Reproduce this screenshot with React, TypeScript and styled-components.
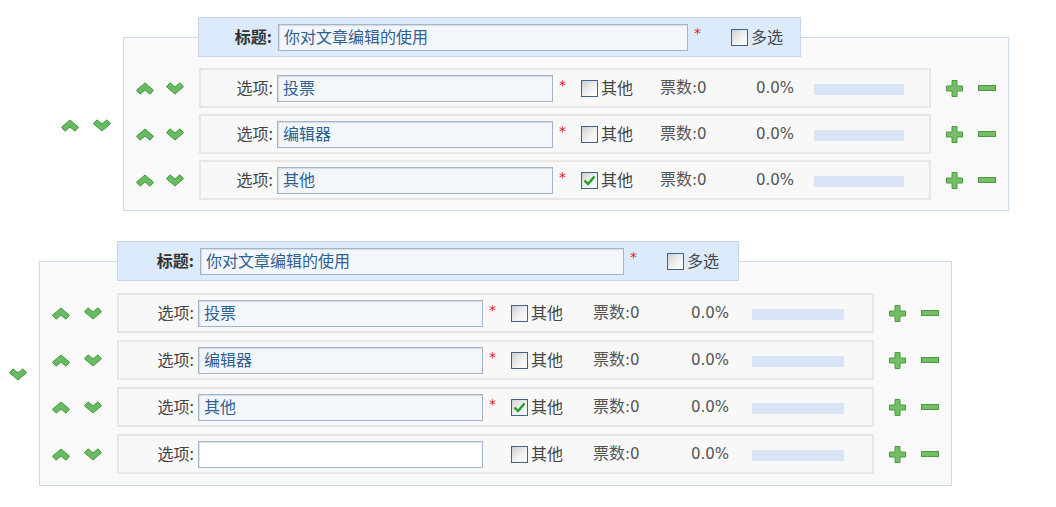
import React from "react";
import styled, { createGlobalStyle } from "styled-components";

const GlobalStyle = createGlobalStyle`
  html, body {
    margin: 0;
    padding: 0;
    background: #ffffff;
  }
  body {
    font-family: "DejaVu Sans", "Noto Sans CJK SC", sans-serif;
    font-size: 15px;
    color: #444;
  }
`;

interface Cols {
  label: number;
  input: number;
  star: number;
  check: number;
  votes: number;
  pct: number;
  bar: number;
}

interface Layout {
  left: number;
  top: number;
  showUp: boolean;
  titleShift: number;
  titleLabel: number;
  titleInput: number;
  titleStar: number;
  titleCheck: number;
  padTop: number;
  padBottom: number;
  gap: number;
  armWidth: number;
  armGap: number;
  rowWidth: number;
  cols: Cols;
}

interface Option {
  text: string;
  required: boolean;
  other: boolean;
}

const cjk = `"Noto Sans CJK SC", sans-serif`;

const Page = styled.div`
  display: flex;
  flex-direction: column;
`;

const Block = styled.section<{ $left: number; $top: number }>`
  display: flex;
  flex-direction: column;
  margin-left: ${(p) => p.$left}px;
  margin-top: ${(p) => p.$top}px;
`;

const TitleBar = styled.div<{ $shift: number }>`
  position: relative;
  z-index: 1;
  display: flex;
  align-items: center;
  height: 40px;
  box-sizing: border-box;
  margin-left: ${(p) => p.$shift}px;
  margin-bottom: -20px;
  background: #dcebfb;
  border: 1px solid #c3d6ec;
  align-self: flex-start;
`;

const TitleLabel = styled.label<{ $w: number }>`
  width: ${(p) => p.$w}px;
  box-sizing: border-box;
  padding-right: 6px;
  text-align: right;
  font-weight: bold;
  color: #333;
  font-family: ${cjk};
  font-size: 16px;
  line-height: 20px;
  margin-top: -2px;
`;

const TextInput = styled.input<{ $w: number; $blank?: boolean }>`
  width: ${(p) => p.$w}px;
  height: 27px;
  box-sizing: border-box;
  border: 1px solid #9fb4cd;
  box-shadow: inset 1px 1px 1px rgba(0, 0, 0, 0.12);
  background: ${(p) => (p.$blank ? "#ffffff" : "#f3f7fb")};
  padding: 0 5px 3px;
  font-family: ${cjk};
  font-size: 16px;
  color: #2f5f93;
  outline: none;
`;

const StarCell = styled.span<{ $w: number }>`
  width: ${(p) => p.$w}px;
  box-sizing: border-box;
  padding-left: 6px;
  color: #e8161b;
  font-size: 14px;
  align-self: flex-start;
  margin-top: 8px;
  line-height: 14px;
`;

const CheckCell = styled.label<{ $w?: number }>`
  display: flex;
  align-items: center;
  gap: 3px;
  width: ${(p) => (p.$w ? `${p.$w}px` : "auto")};
  color: #444;
  font-family: ${cjk};
  font-size: 16px;
  line-height: 20px;
`;

const Box = styled.span`
  display: inline-flex;
  align-items: center;
  justify-content: center;
  width: 17px;
  height: 17px;
  box-sizing: border-box;
  border: 1px solid #3f6389;
  background: linear-gradient(135deg, #cfcfcf 0%, #eeeeee 50%, #ffffff 100%);
  margin-top: 1px;
`;

const BoxText = styled.span`
  margin-top: -2px;
`;

const BodyRow = styled.div`
  display: flex;
  align-items: center;
`;

const Movers = styled.div<{ $gap: number; $width?: number; $pad?: number }>`
  display: flex;
  align-items: center;
  gap: ${(p) => p.$gap}px;
  width: ${(p) => (p.$width ? `${p.$width}px` : "auto")};
  padding-left: ${(p) => p.$pad ?? 0}px;
  box-sizing: border-box;
  flex-shrink: 0;
`;

const OuterMovers = styled(Movers)`
  margin-right: 12px;
  margin-top: 2px;
`;

const Panel = styled.div<{ $top: number; $bottom: number; $gap: number }>`
  display: flex;
  flex-direction: column;
  gap: ${(p) => p.$gap}px;
  padding: ${(p) => p.$top}px 12px ${(p) => p.$bottom}px 0;
  background: #f9f9f9;
  border: 1px solid #cbdaea;
`;

const PanelLine = styled.div`
  display: flex;
  align-items: center;
`;

const OptionRow = styled.div<{ $w: number }>`
  display: flex;
  align-items: center;
  width: ${(p) => p.$w}px;
  height: 40px;
  box-sizing: border-box;
  background: #f8f8f8;
  border: 2px solid #e6e6e6;
`;

const OptionLabel = styled.label<{ $w: number }>`
  width: ${(p) => p.$w}px;
  box-sizing: border-box;
  padding-right: 4px;
  margin-left: -2px;
  text-align: right;
  color: #444;
  font-family: ${cjk};
  font-size: 16px;
  line-height: 20px;
  margin-top: -2px;
`;

const Stat = styled.span<{ $w: number }>`
  width: ${(p) => p.$w}px;
  color: #555;
  font-size: 15px;
  line-height: 20px;
  white-space: nowrap;
`;

const VoteStat = styled(Stat)`
  font-family: "DejaVu Sans", ${cjk};
  margin-top: -2px;
  & b {
    font-weight: normal;
    font-family: ${cjk};
    font-size: 16px;
  }
`;

const Bar = styled.span<{ $w: number }>`
  display: block;
  width: ${(p) => p.$w}px;
  height: 11px;
  margin-top: 2px;
  background: #d9e5f6;
`;

const Actions = styled.div`
  display: flex;
  align-items: center;
  gap: 15px;
  margin-left: 15px;
`;

const IconButton = styled.button`
  display: inline-flex;
  padding: 0;
  border: 0;
  background: none;
  cursor: pointer;
`;

const Chevron = ({ down }: { down?: boolean }) => (
  <IconButton type="button">
    <svg width="18" height="13" viewBox="0 0 18 13">
      <polygon
        points={
          down
            ? "0.5,4.8 4,0.8 9,5 14,0.8 17.5,4.8 9,12"
            : "0.5,8.2 9,1 17.5,8.2 14,12.2 9,8 4,12.2"
        }
        fill="#67bc63"
        stroke="#46983f"
        strokeWidth="1"
        strokeLinejoin="round"
      />
    </svg>
  </IconButton>
);

const PlusIcon = () => (
  <IconButton type="button">
    <svg width="17" height="17" viewBox="0 0 17 17">
      <path
        d="M6 0.5 H11 V6 H16.5 V11 H11 V16.5 H6 V11 H0.5 V6 H6 Z"
        fill="#74bf66"
        stroke="#4a9a42"
        strokeWidth="1"
      />
    </svg>
  </IconButton>
);

const MinusIcon = () => (
  <IconButton type="button">
    <svg width="18" height="17" viewBox="0 0 18 17">
      <rect x="0.5" y="5.5" width="17" height="5" fill="#74bf66" stroke="#4a9a42" strokeWidth="1" />
    </svg>
  </IconButton>
);

const CheckBox = ({ checked }: { checked?: boolean }) => (
  <Box>
    {checked ? (
      <svg width="13" height="11" viewBox="0 0 13 11">
        <path d="M1.5 5.5 L5 9 L11.5 1.5" fill="none" stroke="#1f9d2a" strokeWidth="2.4" />
      </svg>
    ) : null}
  </Box>
);

const layouts: Layout[] = [
  {
    left: 61,
    top: 17,
    showUp: true,
    titleShift: 137,
    titleLabel: 79,
    titleInput: 410,
    titleStar: 43,
    titleCheck: 69,
    padTop: 30,
    padBottom: 10,
    gap: 6,
    armWidth: 75,
    armGap: 12,
    rowWidth: 732,
    cols: { label: 78, input: 276, star: 28, check: 79, votes: 96, pct: 58, bar: 90 },
  },
  {
    left: 9,
    top: 30,
    showUp: false,
    titleShift: 108,
    titleLabel: 82,
    titleInput: 424,
    titleStar: 43,
    titleCheck: 71,
    padTop: 31,
    padBottom: 11,
    gap: 7,
    armWidth: 77,
    armGap: 14,
    rowWidth: 757,
    cols: { label: 81, input: 285, star: 28, check: 82, votes: 98, pct: 61, bar: 92 },
  },
];

const polls: Option[][] = [
  [
    { text: "投票", required: true, other: false },
    { text: "编辑器", required: true, other: false },
    { text: "其他", required: true, other: true },
  ],
  [
    { text: "投票", required: true, other: false },
    { text: "编辑器", required: true, other: false },
    { text: "其他", required: true, other: true },
    { text: "", required: false, other: false },
  ],
];

function PollBlock({ layout, options }: { layout: Layout; options: Option[] }) {
  const { cols } = layout;
  return (
    <Block $left={layout.left} $top={layout.top}>
      <TitleBar $shift={layout.titleShift}>
        <TitleLabel $w={layout.titleLabel}>标题:</TitleLabel>
        <TextInput $w={layout.titleInput} defaultValue="你对文章编辑的使用" />
        <StarCell $w={layout.titleStar}>*</StarCell>
        <CheckCell $w={layout.titleCheck}>
          <CheckBox />
          <BoxText>多选</BoxText>
        </CheckCell>
      </TitleBar>
      <BodyRow>
        <OuterMovers $gap={14}>
          {layout.showUp ? <Chevron /> : null}
          <Chevron down />
        </OuterMovers>
        <Panel $top={layout.padTop} $bottom={layout.padBottom} $gap={layout.gap}>
          {options.map((opt, i) => (
            <PanelLine key={i}>
              <Movers $gap={layout.armGap} $width={layout.armWidth} $pad={12}>
                <Chevron />
                <Chevron down />
              </Movers>
              <OptionRow $w={layout.rowWidth}>
                <OptionLabel $w={cols.label}>选项:</OptionLabel>
                <TextInput $w={cols.input} $blank={!opt.text} defaultValue={opt.text} />
                <StarCell $w={cols.star}>{opt.required ? "*" : ""}</StarCell>
                <CheckCell $w={cols.check}>
                  <CheckBox checked={opt.other} />
                  <BoxText>其他</BoxText>
                </CheckCell>
                <VoteStat $w={cols.votes}>
                  <b>票数</b>:0
                </VoteStat>
                <Stat $w={cols.pct}>0.0%</Stat>
                <Bar $w={cols.bar} />
              </OptionRow>
              <Actions>
                <PlusIcon />
                <MinusIcon />
              </Actions>
            </PanelLine>
          ))}
        </Panel>
      </BodyRow>
    </Block>
  );
}

export default function App() {
  return (
    <Page>
      <GlobalStyle />
      {layouts.map((layout, i) => (
        <PollBlock key={i} layout={layout} options={polls[i]} />
      ))}
    </Page>
  );
}
